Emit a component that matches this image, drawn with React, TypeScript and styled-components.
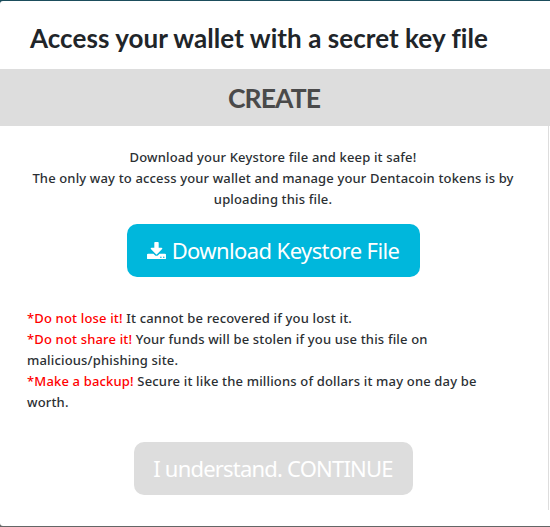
import React from "react";
import styled, { createGlobalStyle } from "styled-components";

const GlobalStyle = createGlobalStyle`
  * { box-sizing: border-box; }
  body { margin: 0; background: #646666; overflow: hidden; }
`;

const Page = styled.main`
  width: 550px;
  height: 527px;
  padding: 1px 0;
  background: linear-gradient(#1b4d5c 50%, #646666 50%);
  font-family: "Noto Sans", "Open Sans", sans-serif;
  color: #2b2f33;
`;

const Modal = styled.section`
  display: flex;
  flex-direction: column;
  height: 525px;
  background: #fff;
  border-radius: 3px 0 0 3px;
`;

const Title = styled.h1`
  margin: 0;
  height: 68px;
  padding: 17px 0 0 30px;
  font: 700 26px/40px Lato, sans-serif;
  letter-spacing: 0.06px;
  color: #212529;
  white-space: nowrap;
`;

const Banner = styled.h2`
  margin: 0;
  height: 57px;
  padding-right: 2px;
  background: #ddd;
  color: #4a4a4a;
  text-align: center;
  font: 700 26.5px/58px Lato, sans-serif;
  letter-spacing: -0.9px;
`;

const Panel = styled.div`
  display: flex;
  flex-direction: column;
  align-items: center;
  width: 549px;
  height: 384px;
  padding: 21px 2px 0 0;
  border-right: 1px solid #ddd;
`;

const Copy = styled.div<{ $left?: boolean }>`
  align-self: stretch;
  font-size: 13px;
  font-weight: 500;
  line-height: 21px;
  letter-spacing: ${(p) => (p.$left ? "0.165px" : "0.15px")};
  text-align: ${(p) => (p.$left ? "left" : "center")};
  padding-left: ${(p) => (p.$left ? "27px" : "0")};
  margin-top: ${(p) => (p.$left ? "31px" : "0")};
`;

const Line = styled.div`
  white-space: nowrap;
`;

const Warning = styled.span`
  color: #f00;
`;

const Button = styled.button<{ $muted?: boolean }>`
  display: flex;
  align-items: center;
  justify-content: center;
  gap: 6px;
  flex: none;
  width: ${(p) => (p.$muted ? "279px" : "293px")};
  height: 53px;
  margin-top: ${(p) => (p.$muted ? "29px" : "14px")};
  padding: 0;
  border: 0;
  border-radius: 10px;
  background: ${(p) => (p.$muted ? "#ddd" : "#00b7dc")};
  color: #fff;
  font: 400 22px/53px "Noto Sans", sans-serif;
  letter-spacing: ${(p) => (p.$muted ? "-0.8px" : "-0.6px")};
  white-space: nowrap;
`;

const DownloadIcon = () => (
  <svg width="19" height="17.5" viewBox="64 0 1664 1536" fill="currentColor" aria-hidden="true">
    <path d="M1344 1344q0-26-19-45t-45-19-45 19-19 45 19 45 45 19 45-19 19-45zm256 0q0-26-19-45t-45-19-45 19-19 45 19 45 45 19 45-19 19-45zm128-224v320q0 40-28 68t-68 28h-1472q-40 0-68-28t-28-68v-320q0-40 28-68t68-28h465l135 136q58 56 136 56t136-56l136-136h464q40 0 68 28t28 68zm-325-569q17 41-14 70l-448 448q-18 19-45 19t-45-19l-448-448q-31-29-14-70 17-39 59-39h256v-448q0-26 19-45t45-19h256q26 0 45 19t19 45v448h256q42 0 59 39z" />
  </svg>
);

export default function App() {
  return (
    <Page>
      <GlobalStyle />
      <Modal>
        <Title>Access your wallet with a secret key file</Title>
        <Banner>CREATE</Banner>
        <Panel>
          <Copy>
            <Line>Download your Keystore file and keep it safe!</Line>
            <Line>The only way to access your wallet and manage your Dentacoin tokens is by</Line>
            <Line>uploading this file.</Line>
          </Copy>
          <Button>
            <DownloadIcon />
            <span>Download Keystore File</span>
          </Button>
          <Copy $left>
            <Line><Warning>*Do not lose it!</Warning> It cannot be recovered if you lost it.</Line>
            <Line><Warning>*Do not share it!</Warning> Your funds will be stolen if you use this file on</Line>
            <Line>malicious/phishing site.</Line>
            <Line><Warning>*Make a backup!</Warning> Secure it like the millions of dollars it may one day be</Line>
            <Line>worth.</Line>
          </Copy>
          <Button $muted>I understand. CONTINUE</Button>
        </Panel>
      </Modal>
    </Page>
  );
}
